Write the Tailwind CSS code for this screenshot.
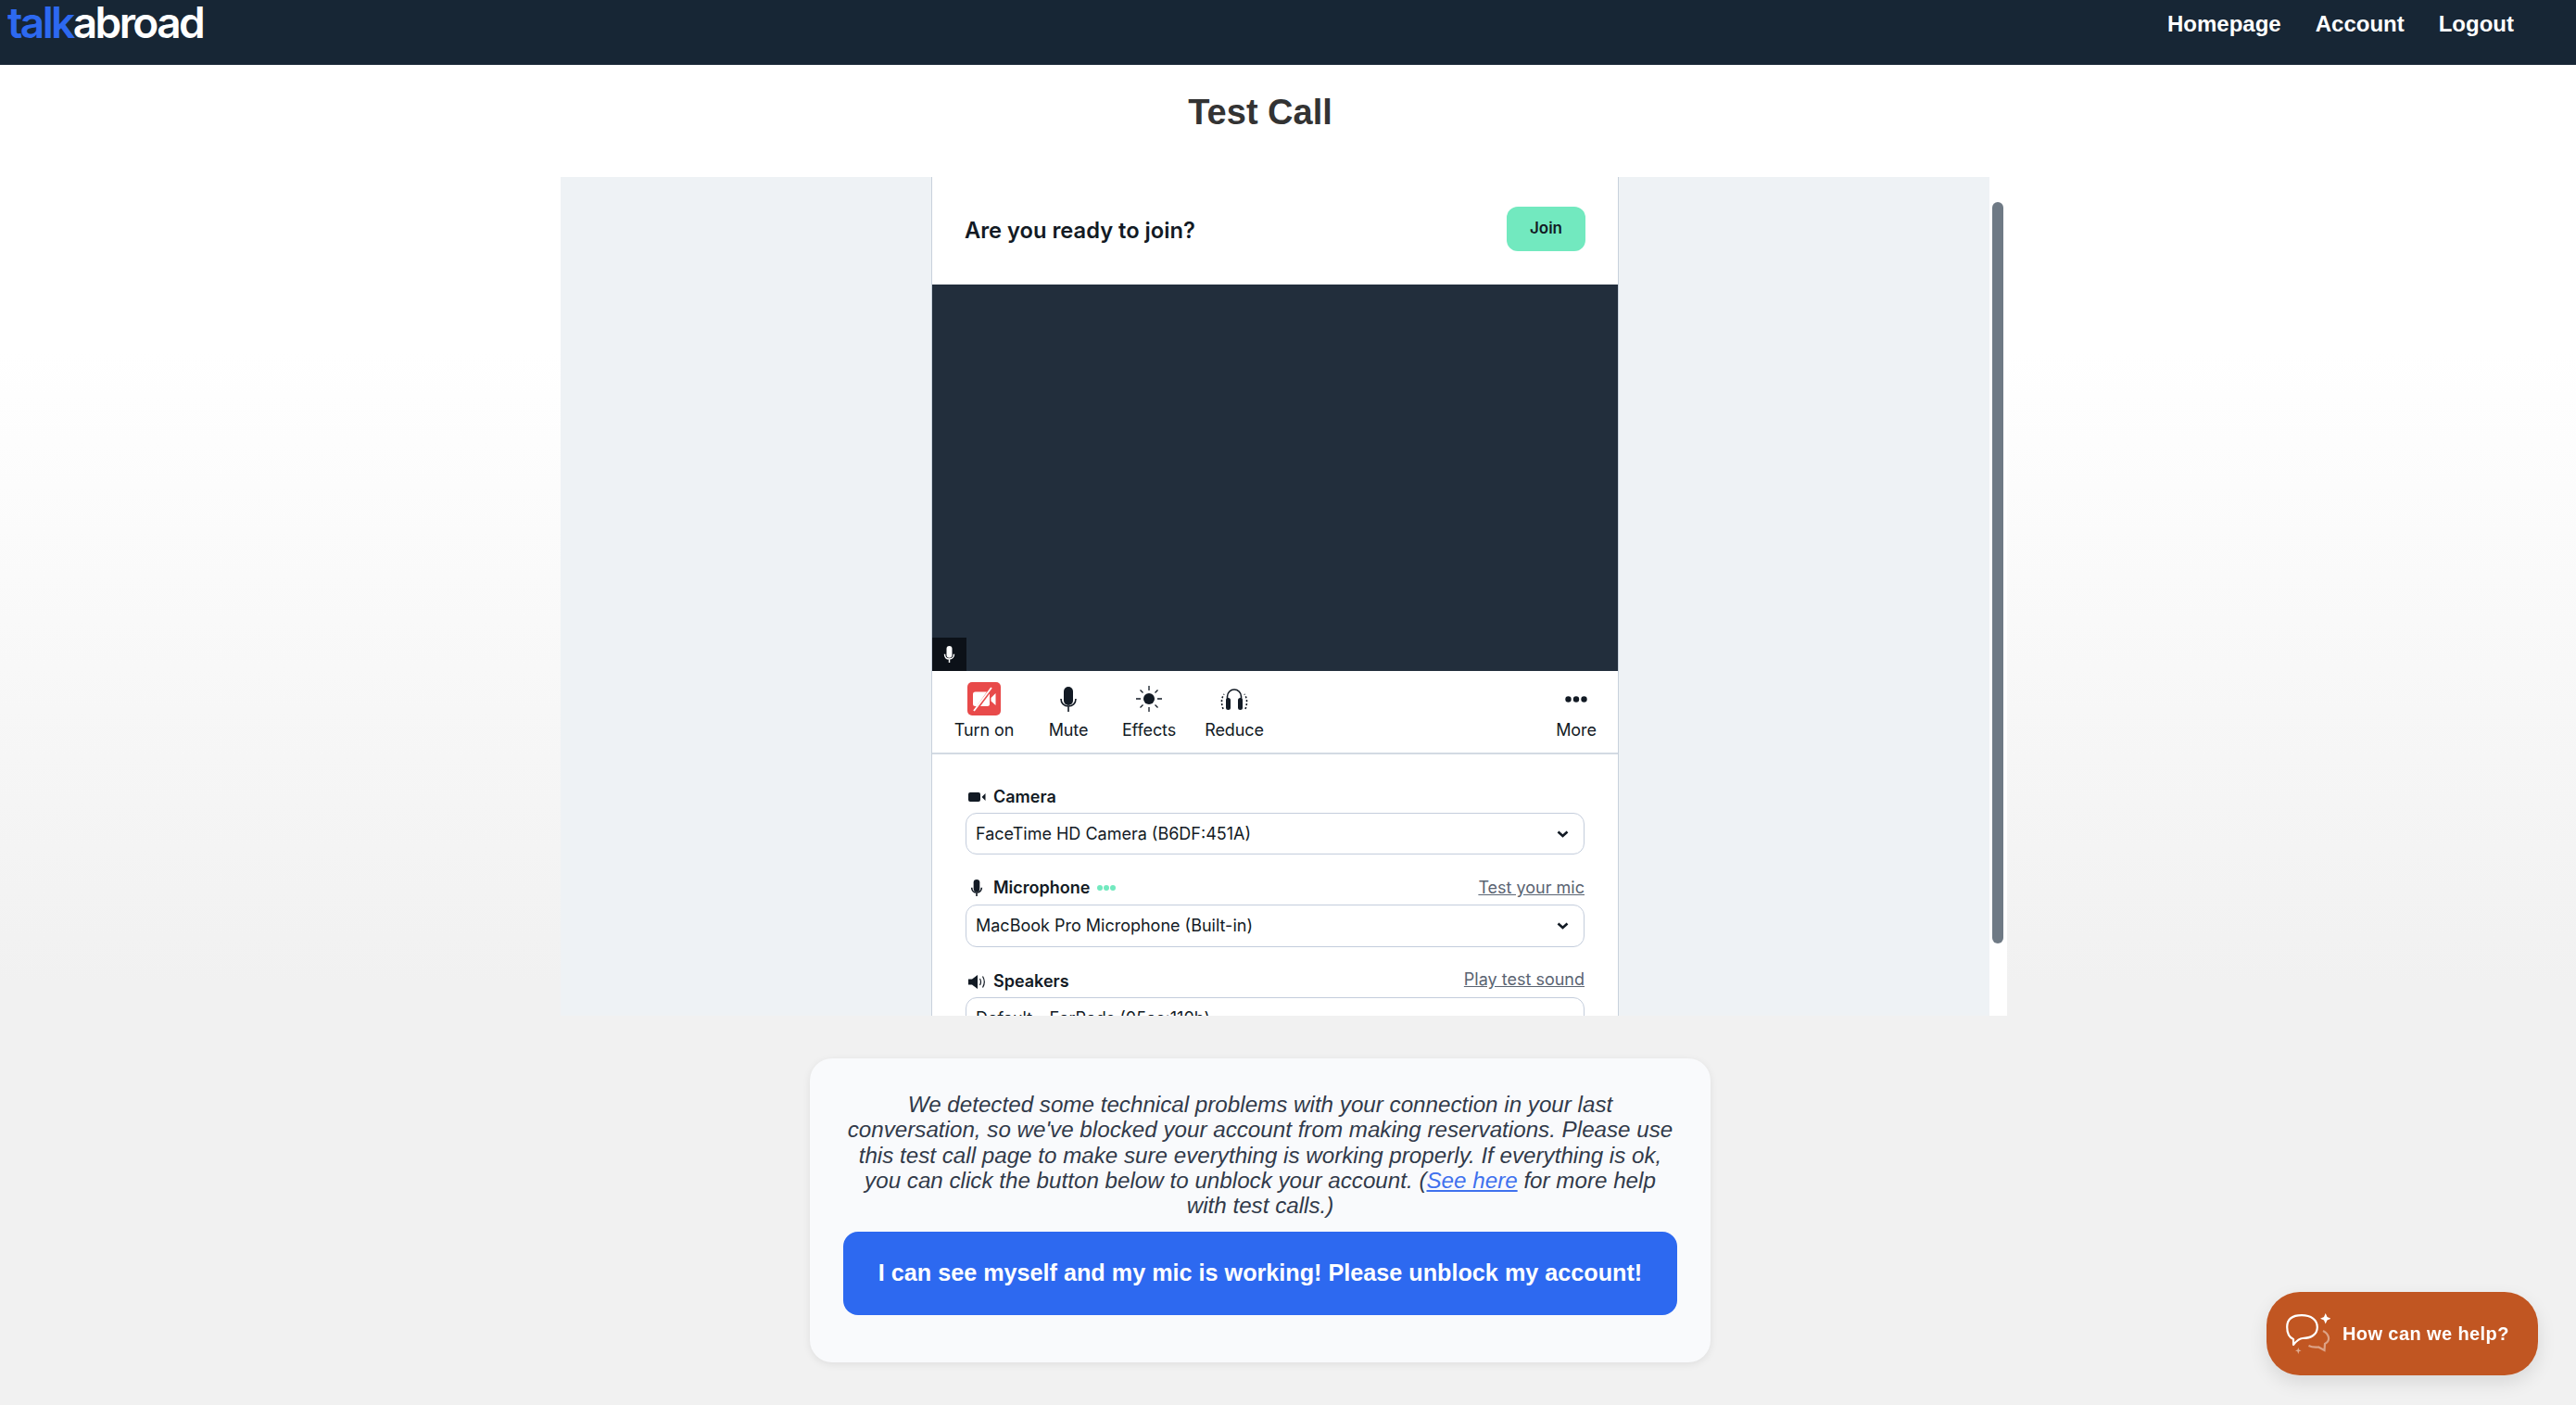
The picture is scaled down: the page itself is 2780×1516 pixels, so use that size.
<!DOCTYPE html>
<html lang="en">
<head>
<meta charset="UTF-8">
<title>Test Call</title>
<script src="https://cdn.jsdelivr.net/npm/@tailwindcss/browser@4"></script>
</head>
<body class="h-[1516px] overflow-hidden bg-gradient-to-b from-white from-[25%] to-[#f1f1f1] to-[70%] font-['Liberation_Sans',sans-serif] text-[#2d3748]">
  <!-- Header -->
  <nav class="h-[70px] bg-[#172635] flex justify-between items-start">
    <a href="#" class="ml-[8px] mt-[-4px] text-[46px] leading-[56px] font-['Inter',sans-serif] font-semibold tracking-[-2.6px] text-white"><span class="text-[#2d69f0]">talk</span>abroad</a>
    <div class="flex gap-[37px] pr-[67px] pt-[12px] text-[24px] leading-[28px] font-bold text-white">
      <a href="#">Homepage</a>
      <a href="#">Account</a>
      <a href="#">Logout</a>
    </div>
  </nav>

  <main class="w-[2720px] flex flex-col items-center">
    <h1 class="mt-[29px] h-[92px] text-[38px] leading-[44px] font-bold text-[#333333]">Test Call</h1>

    <!-- Call frame -->
    <div class="self-start ml-[605px] w-[1561px] h-[905px] flex bg-white overflow-hidden">
      <div class="w-[1542px] flex justify-center bg-[#eef2f5]">
        <div class="w-[742px] h-[905px] bg-white border-x border-[#c8d1dc] font-['Inter',sans-serif] text-[#121a24] overflow-hidden">
          <div class="h-[116px] flex items-center justify-between pl-[35px] pr-[35px]">
            <span class="text-[23.7px] font-semibold">Are you ready to join?</span>
            <button class="-mt-[4px] w-[85px] h-[48px] rounded-[12px] bg-[#72e9bf] text-[17px] font-semibold">Join</button>
          </div>
          <div class="relative h-[417px] bg-[#222e3c]">
            <div class="absolute left-0 bottom-0 w-[37px] h-[36px] bg-[#0c1118] flex items-center justify-center">
              <svg class="w-[13px] h-[18px]" viewBox="0 0 18 27" fill="none">
                <rect x="4.500" y="0" width="9" height="19" rx="4.500" fill="#fff"/>
                <path d="M1.500 13c0 5 3 8 7.500 8s7.500-3 7.500-8M9 21v6" stroke="#fff" stroke-width="2.200"/>
              </svg>
            </div>
          </div>

          <!-- Toolbar -->
          <div class="relative h-[90px] border-b-2 border-[#d3dae3] flex items-start pl-[16px] text-[18px] leading-[22px] tracking-[-.1px] whitespace-nowrap">
            <div class="w-[80px] pt-[12px] flex flex-col items-center">
              <div class="w-[36px] h-[36px] rounded-[5px] bg-[#e84a4a] flex items-center justify-center">
                <svg class="w-[28px] h-[28px]" viewBox="0 0 28 28" fill="none">
                  <path d="M2 9a2.500 2.500 0 0 1 2.500-2.500H17L6 22H4.500A2.500 2.500 0 0 1 2 19.500Z" fill="#fff"/>
                  <path d="M20 8.500V19.500A2.500 2.500 0 0 1 17.500 22H10L20 8.500Z" fill="#fff"/>
                  <path d="M21.500 13l5-5v13l-5-4.500Z" fill="#fff"/>
                  <path d="M3 27L22 2" stroke="#fff" stroke-width="1.800"/>
                </svg>
              </div>
              <span class="mt-[5px]">Turn on</span>
            </div>
            <div class="ml-[11px] w-[80px] pt-[12px] flex flex-col items-center">
              <div class="h-[36px] flex items-center">
                <svg class="w-[18px] h-[27px]" viewBox="0 0 18 27" fill="none">
                  <rect x="4" y="0" width="10" height="20" rx="5" fill="#121a24"/>
                  <path d="M1 13c0 5 3.500 8 8 8s8-3 8-8M9 21v6" stroke="#121a24" stroke-width="1.600"/>
                </svg>
              </div>
              <span class="mt-[5px]">Mute</span>
            </div>
            <div class="ml-[7px] w-[80px] pt-[12px] flex flex-col items-center">
              <div class="h-[36px] flex items-center">
                <svg class="w-[28px] h-[28px]" viewBox="0 0 28 28" fill="none">
                  <circle cx="14" cy="14" r="6" fill="#121a24"/>
                  <path d="M14 0v5M14 23v5M0 14h5M23 14h5M4.500 4.500l3 3M20.500 20.500l3 3M4.500 23.500l3-3M20.500 7.500l3-3" stroke="#121a24" stroke-width="1.300"/>
                </svg>
              </div>
              <span class="mt-[5px]">Effects</span>
            </div>
            <div class="ml-[12px] w-[80px] pt-[12px] flex flex-col items-center">
              <div class="h-[36px] flex items-center">
                <svg class="w-[30px] h-[23px]" viewBox="0 0 30 23" fill="none">
                  <path d="M7.500 12V8.500a7.500 7.500 0 0 1 15 0V12" stroke="#121a24" stroke-width="1.600"/>
                  <rect x="6" y="10" width="5" height="13" rx="2.500" fill="#121a24"/>
                  <rect x="19" y="10" width="5" height="13" rx="2.500" fill="#121a24"/>
                  <path d="M3 22C.8 16 .8 11 4 6M27 22C29.200 16 29.200 11 26 6" stroke="#121a24" stroke-width="1.600" stroke-dasharray="2 2"/>
                </svg>
              </div>
              <span class="mt-[5px]">Reduce</span>
            </div>
            <div class="absolute right-[5px] top-0 w-[80px] pt-[12px] flex flex-col items-center">
              <div class="h-[36px] flex items-center">
                <svg class="w-[24px] h-[7px]" viewBox="0 0 24 7" fill="#121a24">
                  <circle cx="3.500" cy="3.500" r="3.200"/><circle cx="12" cy="3.500" r="3.200"/><circle cx="20.500" cy="3.500" r="3.200"/>
                </svg>
              </div>
              <span class="mt-[5px]">More</span>
            </div>
          </div>

          <!-- Device settings -->
          <div class="px-[36px] pt-[32px] text-[18px] leading-[24px]">
            <div class="flex items-center h-[28px] font-semibold">
              <svg class="ml-[3px] mr-[8px] w-[19px] h-[10px]" viewBox="0 0 19 10" fill="#121a24"><rect width="13" height="10" rx="2"/><path d="M14.500 5l4-4v8Z"/></svg>
              <span>Camera</span>
            </div>
            <div class="mt-[3px] h-[45px] rounded-[12px] border border-[#c4cddc] flex items-center justify-between pl-[10px] pr-[16px]">
              <span>FaceTime HD Camera (B6DF:451A)</span>
              <svg class="w-[13px] h-[8px]" viewBox="0 0 13 8" fill="none"><path d="M1.500 1.500L6.500 6l5-4.500" stroke="#121a24" stroke-width="2.600"/></svg>
            </div>
            <div class="mt-[22px] flex items-center h-[28px]">
              <svg class="ml-[5px] mr-[11px] w-[14px] h-[18px]" viewBox="0 0 18 27" fill="none">
                <rect x="4" y="0" width="10" height="20" rx="5" fill="#121a24"/>
                <path d="M1 13c0 5 3.500 8 8 8s8-3 8-8M9 21v6" stroke="#121a24" stroke-width="2.400"/>
              </svg>
              <span class="font-semibold">Microphone</span>
              <span class="ml-[8px] flex gap-[1.500px]">
                <span class="w-[5.500px] h-[5.500px] rounded-full bg-[#72e9bf]"></span><span class="w-[5.500px] h-[5.500px] rounded-full bg-[#72e9bf]"></span><span class="w-[5.500px] h-[5.500px] rounded-full bg-[#72e9bf]"></span>
              </span>
              <a href="#" class="ml-auto underline text-[#5a6472]">Test your mic</a>
            </div>
            <div class="mt-[4px] h-[46px] rounded-[12px] border border-[#c4cddc] flex items-center justify-between pl-[10px] pr-[16px]">
              <span>MacBook Pro Microphone (Built-in)</span>
              <svg class="w-[13px] h-[8px]" viewBox="0 0 13 8" fill="none"><path d="M1.500 1.500L6.500 6l5-4.500" stroke="#121a24" stroke-width="2.600"/></svg>
            </div>
            <div class="mt-[23px] flex items-center h-[28px]">
              <svg class="ml-[3px] mr-[8px] w-[19px] h-[15px]" viewBox="0 0 19 15" fill="none">
                <path d="M0 4.500h4L10 0v15l-6-4.500H0Z" fill="#121a24"/>
                <path d="M12.500 4c1.300 2.300 1.300 4.700 0 7M15.500 1.500c2.300 3.800 2.300 8.200 0 12" stroke="#121a24" stroke-width="1.200"/>
              </svg>
              <span class="font-semibold">Speakers</span>
              <a href="#" class="ml-auto -mt-[4px] underline text-[#5a6472]">Play test sound</a>
            </div>
            <div class="mt-[3px] h-[46px] rounded-[12px] border border-[#c4cddc] flex items-center pl-[10px]">
              <span>Default - EarPods (05ac:110b)</span>
            </div>
          </div>
        </div>
      </div>
      <!-- Scrollbar -->
      <div class="w-[19px] pt-[27px] pl-[3px] bg-white">
        <div class="w-[12px] h-[800px] rounded-full bg-[#6f7a85]"></div>
      </div>
    </div>

    <!-- Unblock card -->
    <div class="mt-[46px] w-[972px] h-[328px] rounded-[24px] bg-[#f9fafc] shadow-[0_2px_8px_rgba(0,0,0,.08)] px-[36px] pt-[36px]">
      <p class="text-center italic text-[24.2px] leading-[27.3px] text-[#323a4a]">We detected some technical problems with your connection in your last conversation, so we've blocked your account from making reservations. Please use this test call page to make sure everything is working properly. If everything is ok, you can click the button below to unblock your account. (<a href="#" class="text-[#3f71ee] underline">See here</a> for more help with test calls.)</p>
      <button class="mt-[14.500px] w-full h-[90px] rounded-[16px] bg-[#2d69f0] text-white text-[25.200px] font-bold">I can see myself and my mic is working! Please unblock my account!</button>
    </div>
  </main>

  <!-- Help button -->
  <button class="fixed left-[2446px] top-[1394px] w-[293px] h-[90px] rounded-[36px] bg-[#c15622] shadow-[0_8px_20px_rgba(0,0,0,.1)] flex items-center pl-[21px] text-white text-[20px] font-bold tracking-[.4px]">
    <svg class="w-[48px] h-[44px] shrink-0" viewBox="0 0 48 44" fill="none">
      <path d="M1.200 15C1.200 6 7 2.200 17 2.200S33.800 7 33.800 15 27 27 18 27C15 27 12.500 28.500 8 34L8 28C3.500 26 1.200 21 1.200 15Z" stroke="#fff" stroke-width="2.200" stroke-linejoin="round"/>
      <path d="M40 19c6 3 9 10 2 14l-.5 7-6.500-3.500c-3 .3-7 .3-10.500-1.500" stroke="#fff" stroke-opacity=".45" stroke-width="2.200"/>
      <path d="M42.700 0l1.800 4 4 1.700-4 1.800-1.800 4-1.700-4-4-1.800 4-1.700Z" fill="#fff"/>
      <path d="M13.300 37l.9 2.400 2.400.9-2.400.9-.9 2.800-.9-2.800-2.400-.9 2.400-.9Z" fill="#fff" fill-opacity=".5"/>
    </svg>
    <span class="ml-[13px]">How can we help?</span>
  </button>
</body>
</html>
